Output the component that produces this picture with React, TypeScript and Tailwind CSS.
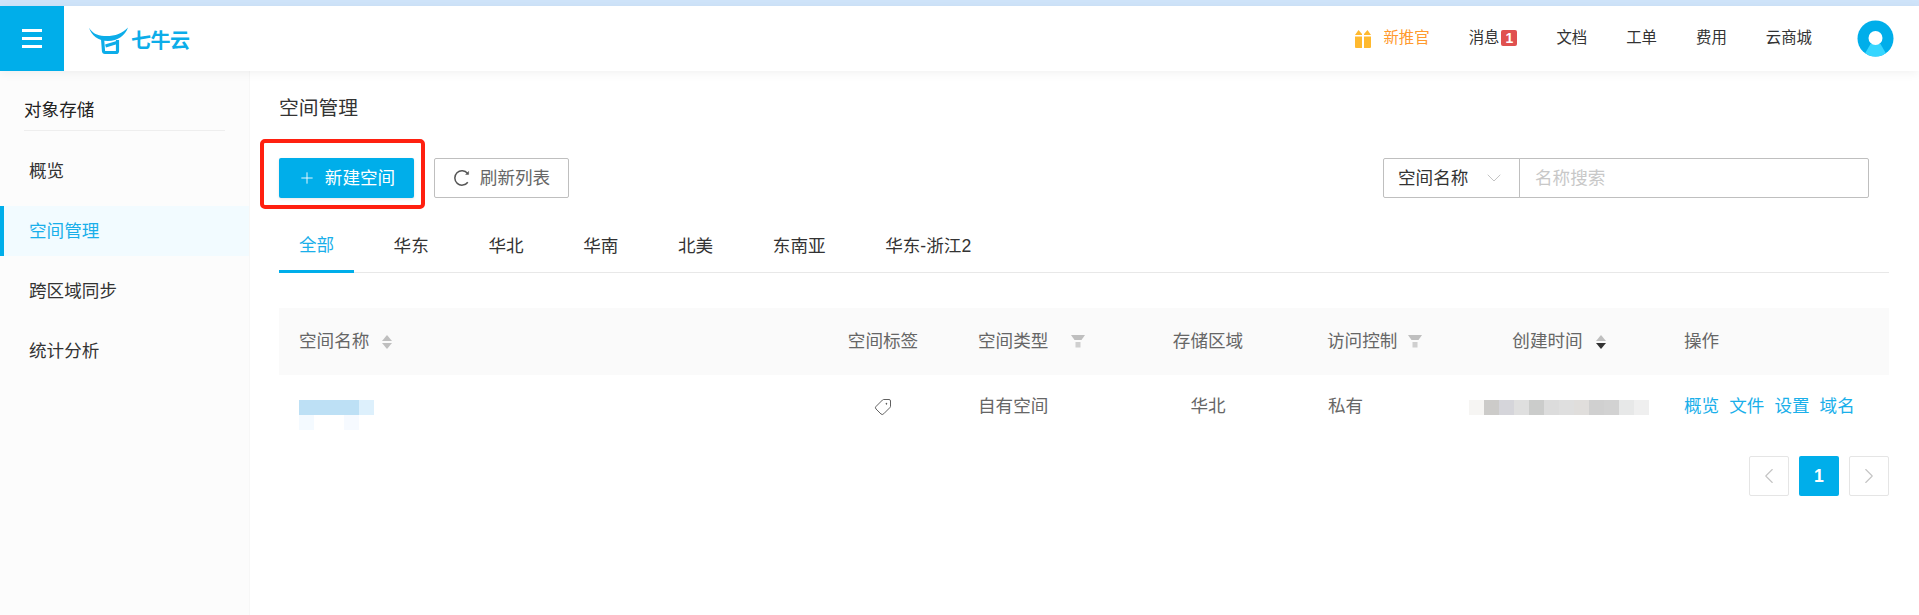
import { ChevronDown, ChevronLeft, ChevronRight, Plus, Tag } from "lucide-react";

const FONT = "font-['Liberation_Sans','Noto_Sans_CJK_SC',sans-serif]";

const dateBlocks = [
  "bg-[#f6f5f3]", "bg-[#cccbc9]", "bg-[#d5d5da]", "bg-[#dfdfdf]", "bg-[#cbcccb]", "bg-[#dcdcdc]",
  "bg-[#dfdfdf]", "bg-[#e0dedc]", "bg-[#d0d0d0]", "bg-[#d2d2d2]", "bg-[#e7e8e8]", "bg-[#efefef]",
];

function Logo() {
  return (
    <svg width="46" height="32" viewBox="0 0 46 32" className="text-[#0cade9]" fill="none" stroke="currentColor">
      <path d="M5 4.5 C8 10 13 12.5 20 13 C30 13.5 38 11 44 4.5 C41 12.5 34 18 24 18 C14 18 7.5 12.5 5 4.5 Z" fill="currentColor" stroke="none" />
      <path d="M18.5 15 L19.5 28 Q19.6 29.5 21 29.5 H32 Q33.5 29.5 33.5 28 L33.5 17" strokeWidth="3.2" />
      <path d="M21.5 23 L33 19.5" strokeWidth="3.2" />
    </svg>
  );
}

function Gift() {
  return (
    <svg width="18" height="19" viewBox="0 0 18 19">
      <path d="M1 6 L4.5 1 L8 5 V6 Z M10 6 V5 L13.5 1 L17 6 Z" fill="#ffb92e" />
      <path d="M1 7.5 H8 V19 H2 Q1 19 1 18 Z M10 7.5 H17 V18 Q17 19 16 19 H10 Z" fill="#ffb92e" />
    </svg>
  );
}

function Avatar() {
  return (
    <svg width="37" height="37" viewBox="0 0 37 37">
      <defs>
        <clipPath id="avatar-clip">
          <circle cx="18.5" cy="18.5" r="18" />
        </clipPath>
      </defs>
      <circle cx="18.5" cy="18.5" r="18" fill="#00aeea" />
      <path d="M13.5 24 H23.5 L31 37 H6 Z" fill="#36d6ff" clipPath="url(#avatar-clip)" />
      <circle cx="18.5" cy="18" r="7" fill="white" />
    </svg>
  );
}

function Reload() {
  return (
    <svg width="18" height="18" viewBox="0 0 18 18" fill="none" stroke="#555555" strokeWidth="1.5" className="mr-[9px]">
      <path d="M14.6 4.4 A7.2 7.2 0 1 0 14.8 13.2" />
      <path d="M15.6 2.4 V5.4 H12.6 Z" fill="#555555" strokeWidth="0.5" />
    </svg>
  );
}

function Sorter({ active }: { active?: boolean }) {
  return (
    <span className="ml-[13px] flex flex-col gap-[2px]">
      <span className="h-0 w-0 border-x-[5px] border-b-[6px] border-x-transparent border-b-[#bfbfbf]" />
      {active ? (
        <span className="h-0 w-0 border-x-[5px] border-t-[6px] border-x-transparent border-t-[#333333]" />
      ) : (
        <span className="h-0 w-0 border-x-[5px] border-t-[6px] border-x-transparent border-t-[#bfbfbf]" />
      )}
    </span>
  );
}

function Funnel() {
  return (
    <svg width="14" height="13" viewBox="0 0 14 13">
      <path d="M0 0 H14 L10.5 5 H3.5 Z" fill="#bfbfbf" />
      <path d="M4.5 7 H9.5 V12.5 H4.5 Z" fill="#cfcfcf" />
    </svg>
  );
}

export default function App() {
  const headerLinks = ["文档", "工单", "费用", "云商城"];
  const menu = ["概览", "空间管理", "跨区域同步", "统计分析"];
  const tabs = ["华东", "华北", "华南", "北美", "东南亚", "华东-浙江2"];

  return (
    <div className={`${FONT} flex h-[615px] w-[1919px] flex-col overflow-hidden bg-white text-[17.6px] text-[#333333]`}>
      <div className="h-[6px] shrink-0 bg-[#cfe4fa]" />

      <header className="relative z-10 flex h-[65px] shrink-0 items-center bg-white pr-[25px] shadow-[0_2px_10px_rgba(0,0,0,0.06)]">
        <div className="flex h-full w-[64px] flex-col items-center justify-center gap-[5px] bg-[#00aeea]">
          <span className="h-[3px] w-[20px] bg-white" />
          <span className="h-[3px] w-[20px] bg-white" />
          <span className="h-[3px] w-[20px] bg-white" />
        </div>
        <div className="ml-[20px] flex items-center">
          <Logo />
          <span className="ml-[1px] mt-[4px] text-[20px] leading-none font-bold tracking-[-0.5px] text-[#0cade9]">七牛云</span>
        </div>

        <div className="ml-auto flex items-center text-[15.4px]">
          <span className="flex items-center text-[#ff9a2e]">
            <Gift />
            <span className="ml-[11px] -translate-y-px">新推官</span>
          </span>
          <span className="ml-[39px] flex items-center">
            <span className="-translate-y-px">消息</span>
            <span className="ml-[2px] flex h-[16px] w-[16px] items-center justify-center rounded-[2px] bg-[#e0504f] text-[14px] font-bold text-white">
              1
            </span>
          </span>
          {headerLinks.map((l) => (
            <span key={l} className="ml-[39px] -translate-y-px">
              {l}
            </span>
          ))}
          <span className="ml-[45px]">
            <Avatar />
          </span>
        </div>
      </header>

      <div className="flex min-h-0 flex-1">
        <aside className="w-[250px] shrink-0 border-r border-[#f7f7f7] bg-[#fcfcfc]">
          <div className="mx-[24px] flex h-[60px] items-center border-b border-[#eeeeee] pt-[28px] pb-[8px] leading-none text-[#222222]">
            对象存储
          </div>
          <nav className="mt-[15px] flex flex-col gap-[10px]">
            {menu.map((m) =>
              m === "空间管理" ? (
                <div key={m} className="flex h-[50px] items-center border-l-4 border-[#00aeea] bg-[#f2fbff] pl-[25px] text-[#1aafea]">
                  {m}
                </div>
              ) : (
                <div key={m} className="flex h-[50px] items-center pl-[29px] text-[#333333]">
                  {m}
                </div>
              ),
            )}
          </nav>
        </aside>

        <main className="min-w-0 flex-1 pt-[28px] pr-[30px] pl-[29px]">
          <h1 className="flex h-[20px] items-center text-[19.8px] leading-none text-[#333333]">空间管理</h1>

          <div className="mt-[39px] flex items-center">
            <div className="relative">
              <button className="flex h-[40px] w-[135px] items-center justify-center rounded-[2px] bg-[#00aeea] text-white shadow-[0_1px_3px_rgba(0,0,0,0.1)]">
                <Plus size={18} strokeWidth={1.2} className="mr-[9px]" />
                新建空间
              </button>
              <div className="pointer-events-none absolute top-[-19px] left-[-19px] h-[70px] w-[165px] rounded-[5px] border-4 border-[#ff2010]" />
            </div>
            <button className="ml-[20px] flex h-[40px] w-[135px] items-center justify-center rounded-[2px] border border-[#bfbfbf] bg-white text-[#666666]">
              <Reload />
              刷新列表
            </button>
            <div className="ml-auto mr-[20px] flex h-[40px]">
              <div className="flex w-[137px] items-center justify-between rounded-l-[2px] border border-[#bfbfbf] pr-[13px] pl-[14px] text-[#333333]">
                空间名称
                <ChevronDown size={24} strokeWidth={1} className="text-[#c4c4c4]" />
              </div>
              <div className="-ml-px flex w-[350px] items-center rounded-r-[2px] border border-[#bfbfbf] pl-[15px] text-[#c8c8c8]">
                名称搜索
              </div>
            </div>
          </div>

          <div className="mt-[23px] flex h-[52px] border-b border-[#e8e8e8]">
            <div className="flex h-[52px] w-[75px] items-center justify-center border-b-[3px] border-[#00aeea] text-[#1aafea]">
              全部
            </div>
            {tabs.map((t) => (
              <div key={t} className="ml-[19.6px] flex h-[52px] items-center px-[20px] pb-[2px]">
                {t}
              </div>
            ))}
          </div>

          <div className="mt-[35px] grid grid-cols-[549px_110px_190px_160px_166px_210px_225px] items-center text-[#666666]">
            <div className="flex h-[67px] items-center bg-[#fafafa] pl-[20px]">
              空间名称
              <Sorter />
            </div>
            <div className="flex h-[67px] items-center justify-center bg-[#fafafa]">空间标签</div>
            <div className="flex h-[67px] items-center gap-[23px] bg-[#fafafa] pl-[40px]">
              空间类型
              <Funnel />
            </div>
            <div className="flex h-[67px] items-center justify-center bg-[#fafafa]">存储区域</div>
            <div className="flex h-[67px] items-center gap-[11px] bg-[#fafafa] pl-[39px]">
              访问控制
              <Funnel />
            </div>
            <div className="flex h-[67px] items-center justify-center bg-[#fafafa]">
              创建时间
              <Sorter active />
            </div>
            <div className="flex h-[67px] items-center bg-[#fafafa] pl-[20px]">操作</div>

            <div className="flex h-[65px] flex-col justify-center pt-[14px] pl-[20px]">
              <div className="flex h-[15px] w-[75px]">
                <span className="w-[60px] bg-[#bde0f5]" />
                <span className="w-[15px] bg-[#ddf0fc]" />
              </div>
              <div className="flex h-[15px] w-[60px] justify-between">
                <span className="w-[15px] bg-[#f4faff]" />
                <span className="w-[15px] bg-[#f6faff]" />
              </div>
            </div>
            <div className="flex h-[65px] items-center justify-center">
              <Tag size={18} strokeWidth={1.25} className="-translate-y-px rotate-90 text-[#555555]" />
            </div>
            <div className="-translate-y-px pl-[40px]">自有空间</div>
            <div className="-translate-y-px text-center">华北</div>
            <div className="-translate-y-px pl-[40px]">私有</div>
            <div className="flex justify-center">
              {dateBlocks.map((c, i) => (
                <span key={i} className={`h-[15px] w-[15px] ${c}`} />
              ))}
            </div>
            <div className="flex -translate-y-px gap-[10px] pl-[20px] text-[#1aafea]">
              <span>概览</span>
              <span>文件</span>
              <span>设置</span>
              <span>域名</span>
            </div>
          </div>

          <div className="mt-[16px] flex justify-end gap-[10px]">
            <button className="flex h-[40px] w-[40px] items-center justify-center rounded-[2px] border border-[#e5e5e5] text-[#c4c4c4]">
              <ChevronLeft size={26} strokeWidth={1} />
            </button>
            <button className="flex h-[40px] w-[40px] items-center justify-center rounded-[2px] bg-[#00aeea] font-bold text-white">
              1
            </button>
            <button className="flex h-[40px] w-[40px] items-center justify-center rounded-[2px] border border-[#e5e5e5] text-[#c4c4c4]">
              <ChevronRight size={26} strokeWidth={1} />
            </button>
          </div>
        </main>
      </div>
    </div>
  );
}
